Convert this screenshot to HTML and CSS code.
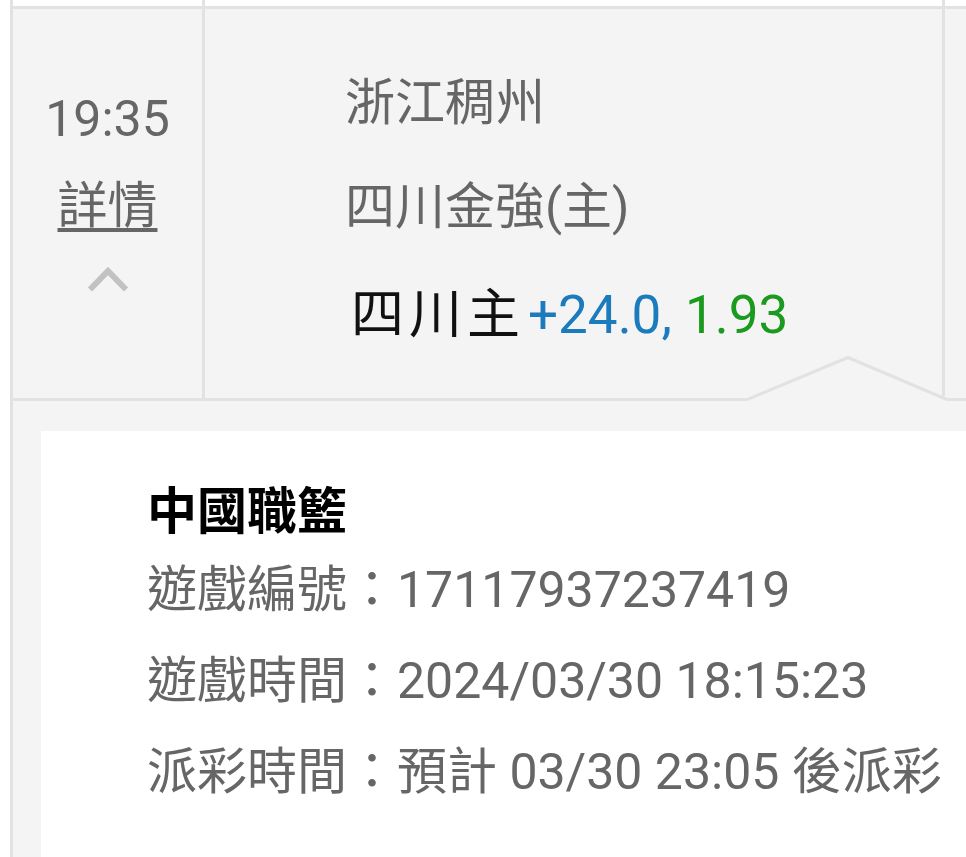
FILE: index.html
```html
<!DOCTYPE html>
<html lang="zh-Hant">
<head>
  <meta charset="UTF-8">
  <title>賽事詳情</title>
  <link rel="stylesheet" href="styles.css">
</head>
<body>
<div class="board">
  <div class="row prev">
    <div class="cell time-cell"></div>
    <div class="cell teams-cell"></div>
    <div class="cell side-cell"></div>
  </div>

  <div class="row match">
    <div class="cell time-cell">
      <div class="time">19:35</div>
      <a class="more" href="#">詳情</a>
      <svg class="chevron" width="44" height="28" viewBox="0 0 44 28">
        <polyline points="4,24.5 22,6 40,24.5" fill="none" stroke="#c2c2c2" stroke-width="6"/>
      </svg>
    </div>
    <div class="cell teams-cell">
      <div class="team">浙江稠州</div>
      <div class="team">四川金強(主)</div>
      <div class="pick"><span class="pick-name">四川主</span><span class="line">+24.0,</span> <span class="odds">1.93</span></div>
    </div>
    <div class="cell side-cell"></div>
    <!-- arrow pointing at the detail panel -->
    <svg class="notch" width="204" height="48" viewBox="0 0 204 48">
      <rect x="0" y="43" width="200" height="5" fill="#f4f4f4"/>
      <polyline points="0,46.5 101,4.5 200,46.5" fill="#f4f4f4" stroke="#e2e2e2" stroke-width="3"/>
    </svg>
  </div>

  <div class="detail">
    <div class="panel">
      <div class="league">中國職籃</div>
      <div class="info">遊戲編號：17117937237419</div>
      <div class="info">遊戲時間：2024/03/30 18:15:23</div>
      <div class="info">派彩時間：預計 03/30 23:05 後派彩</div>
    </div>
  </div>
</div>
</body>
</html>
```

FILE: styles.css
```css
* { box-sizing: border-box; }
body { margin: 0; background: #fff; font-family: Roboto, "Noto Sans CJK TC", sans-serif; font-size: 50px; color: #666; }
.board { margin-left: 10px; border-left: 3px solid #e2e2e2; }

.row { display: grid; grid-template-columns: 192px 740px 1fr; }
.cell { border-right: 3px solid #e2e2e2; }
.side-cell { border-right: none; }
.prev { height: 6px; background: #fff; }
.match { position: relative; height: 395px; background: #f4f4f4; border-top: 3px solid #e2e2e2; border-bottom: 3px solid #e2e2e2; }

.time-cell { display: flex; flex-direction: column; align-items: center; padding-top: 80px; }
.time { line-height: 60px; }
.more { margin-top: 27px; line-height: 60px; color: #666; text-decoration: underline; text-decoration-thickness: 4px; text-underline-offset: 5px; }
.chevron { display: block; margin-top: 29px; }

.teams-cell { padding: 42px 0 0 140px; }
.team { line-height: 104px; }
.pick { margin-top: 4px; padding-left: 6px; font-size: 53px; line-height: 104px; white-space: nowrap; }
.pick-name { color: #111; letter-spacing: 5px; }
.line { margin-left: 3px; color: #1c7bbd; }
.odds { color: #1a9a1e; }

.notch { position: absolute; left: 734px; bottom: -3px; }

.detail { background: #f4f4f4; padding: 30px 0 0 28px; }
.panel { min-height: 426px; background: #fff; padding: 48px 0 0 106px; }
.league { color: #000; font-weight: bold; line-height: 66px; }
.info { line-height: 91px; white-space: nowrap; }
```
